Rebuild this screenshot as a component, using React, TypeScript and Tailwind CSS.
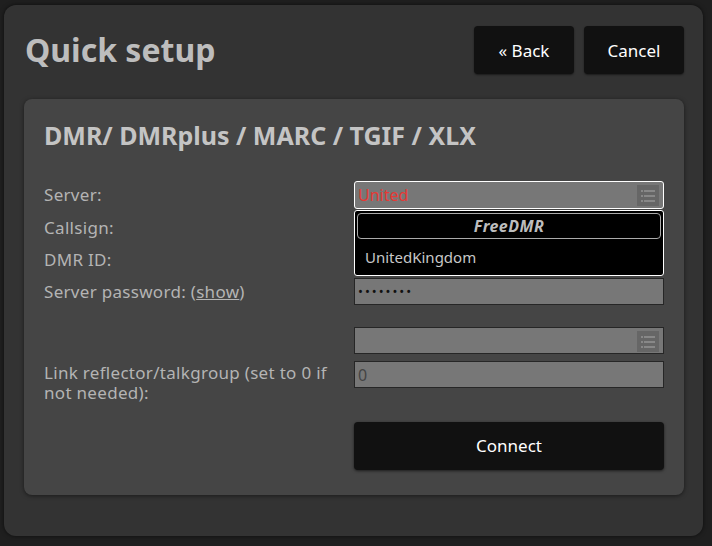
import React from "react";

function ListIcon() {
  return (
    <div className="absolute right-[4px] top-[3px] flex h-[21px] w-[22px] items-center justify-center bg-[#666]">
      <svg width="16" height="14" viewBox="0 0 16 14">
        <rect x="1" y="1" width="2" height="2" fill="#888" />
        <rect x="4" y="1" width="11" height="2" fill="#888" />
        <rect x="1" y="6" width="2" height="2" fill="#888" />
        <rect x="4" y="6" width="11" height="2" fill="#888" />
        <rect x="1" y="11" width="2" height="2" fill="#888" />
        <rect x="4" y="11" width="11" height="2" fill="#888" />
      </svg>
    </div>
  );
}

function Label({ children }: { children: React.ReactNode }) {
  return (
    <div className="w-[310px] text-[17px] leading-[20px] tracking-[0.3px] text-[#b4b4b4]">{children}</div>
  );
}

function Input({ children }: { children?: React.ReactNode }) {
  return (
    <div className="relative flex h-[27px] w-[310px] items-center border border-[#262626] bg-[#777] px-[3px] text-[16px] text-[#333]">
      {children}
    </div>
  );
}

export default function App() {
  return (
    <div
      className="h-[546px] w-[712px] bg-[#1f1f1f] pl-[4px] pr-[9px] pt-[5px] pb-[10px]"
      style={{ fontFamily: '"Noto Sans", "Open Sans", sans-serif' }}
    >
      <div className="flex h-full w-full flex-col rounded-[12px] bg-[#333] pl-[20px] pr-[19px] pt-[21px] shadow-[0_0_4px_rgba(0,0,0,0.6)]">
        <div className="flex items-start justify-between">
          <h1 className="mt-[3px] pl-[1px] text-[32px] font-bold leading-[42px] text-[#bdbdbd]">Quick setup</h1>
          <div className="flex gap-[10px]">
            <button className="h-[48px] w-[100px] rounded-[4px] bg-[#111] pt-[1px] text-[17px] text-white shadow-[0_1px_2px_rgba(0,0,0,0.5)]">
              « Back
            </button>
            <button className="h-[48px] w-[100px] rounded-[4px] bg-[#111] pt-[1px] text-[17px] text-white shadow-[0_1px_2px_rgba(0,0,0,0.5)]">
              Cancel
            </button>
          </div>
        </div>

        <div className="mt-[25px] flex h-[396px] flex-col rounded-[8px] bg-[#454545] px-[20px] pt-[19px] shadow-[0_1px_4px_rgba(0,0,0,0.5)]">
          <h2 className="text-[25px] font-bold leading-[34px] text-[#c4c4c4]">DMR/ DMRplus / MARC / TGIF / XLX</h2>

          <div className="mt-[29px] flex flex-col">
            <div className="relative flex items-center">
              <Label>Server:</Label>
              <div className="relative flex h-[28px] w-[310px] items-center rounded-[3px] border border-white bg-[#777] px-[3px] text-[16px] text-[#e53935]">
                United
                <ListIcon />
              </div>
              <div className="absolute left-[310px] top-[29px] z-10 flex h-[66px] w-[310px] flex-col rounded-[3px] border border-white bg-black p-[2px]">
                <div className="flex h-[26px] items-center justify-center rounded-[4px] border border-[#aaa] text-[16px] font-bold italic tracking-[0.4px] text-[#bdbdbd]">
                  FreeDMR
                </div>
                <div className="mt-[8px] pl-[8px] text-[15px] leading-[20px] text-[#c8c8c8]">UnitedKingdom</div>
              </div>
            </div>

            <div className="mt-[5px] flex items-center">
              <Label>Callsign:</Label>
              <Input />
            </div>
            <div className="mt-[5px] flex items-center">
              <Label>DMR ID:</Label>
              <Input />
            </div>
            <div className="mt-[5px] flex items-center">
              <Label>
                Server password: (<span className="underline">show</span>)
              </Label>
              <Input>
                <span className="tracking-[2px] text-[13px] text-[#111]">••••••••</span>
              </Input>
            </div>

            <div className="mt-[22px] flex items-center">
              <Label>{""}</Label>
              <Input>
                <ListIcon />
              </Input>
            </div>
            <div className="mt-[7px] flex items-start">
              <Label>
                <div className="pt-[2px] pr-[20px]">Link reflector/talkgroup (set to 0 if not needed):</div>
              </Label>
              <Input>
                <span className="text-[#444]">0</span>
              </Input>
            </div>

            <div className="mt-[19px] flex">
              <div className="w-[310px]" />
              <button className="h-[48px] w-[310px] rounded-[4px] bg-[#111] text-[17px] text-white shadow-[0_1px_3px_rgba(0,0,0,0.6)]">
                Connect
              </button>
            </div>
          </div>
        </div>
      </div>
    </div>
  );
}
